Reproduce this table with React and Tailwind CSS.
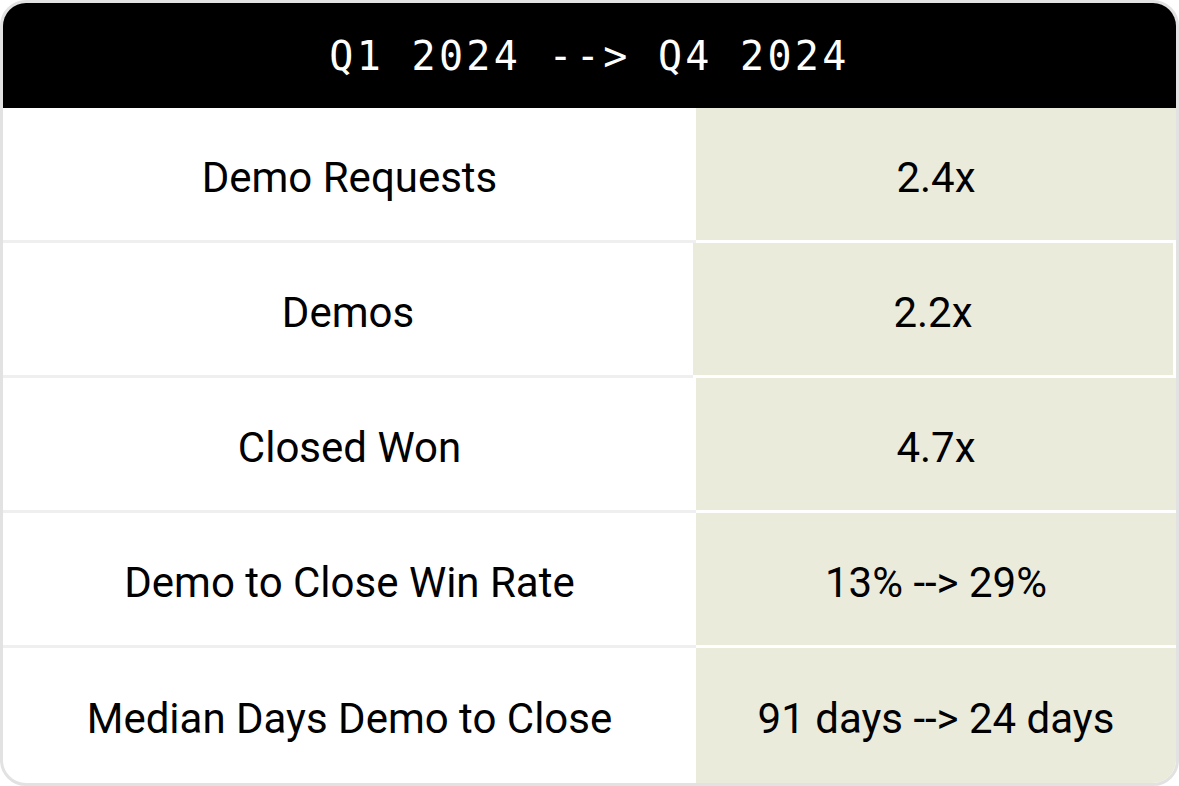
import React from 'react';

const rows = [
    { label: 'Demo Requests', value: '2.4x' },
    { label: 'Demos', value: '2.2x', framed: true },
    { label: 'Closed Won', value: '4.7x' },
    { label: 'Demo to Close Win Rate', value: '13% --> 29%' },
    { label: 'Median Days Demo to Close', value: '91 days --> 24 days', last: true },
];

export default function App() {
    return (
        <div className="w-[1179px] h-[786px] bg-white">
            <div className="w-full h-full border-[3px] border-[#e2e2e2] rounded-[26px] overflow-hidden flex flex-col bg-white">
                {/* header */}
                <div className="h-[105px] shrink-0 bg-black flex items-center justify-center">
                    <span className="text-white text-[40px] tracking-[3.3px] font-['DejaVu_Sans_Mono',monospace] leading-none">
                        Q1 2024 --&gt; Q4 2024
                    </span>
                </div>

                {rows.map((row) => (
                    <div key={row.label} className="flex h-[135px] font-['Roboto',sans-serif] text-[42px] text-black">
                        <div
                            className={`${row.framed ? 'w-[690px]' : 'w-[693px]'} shrink-0 flex items-center justify-center pt-[6px] ${row.last ? '' : 'border-b-[3px] border-[#efefef]'}`}
                        >
                            {row.label}
                        </div>
                        <div
                            className={`flex-1 bg-[#ebebdc] flex items-center justify-center pt-[6px] ${row.last ? '' : 'border-b-[3px] border-white'} ${row.framed ? 'border-r-[3px] border-white' : ''}`}
                        >
                            {row.value}
                        </div>
                    </div>
                ))}
            </div>
        </div>
    );
}
